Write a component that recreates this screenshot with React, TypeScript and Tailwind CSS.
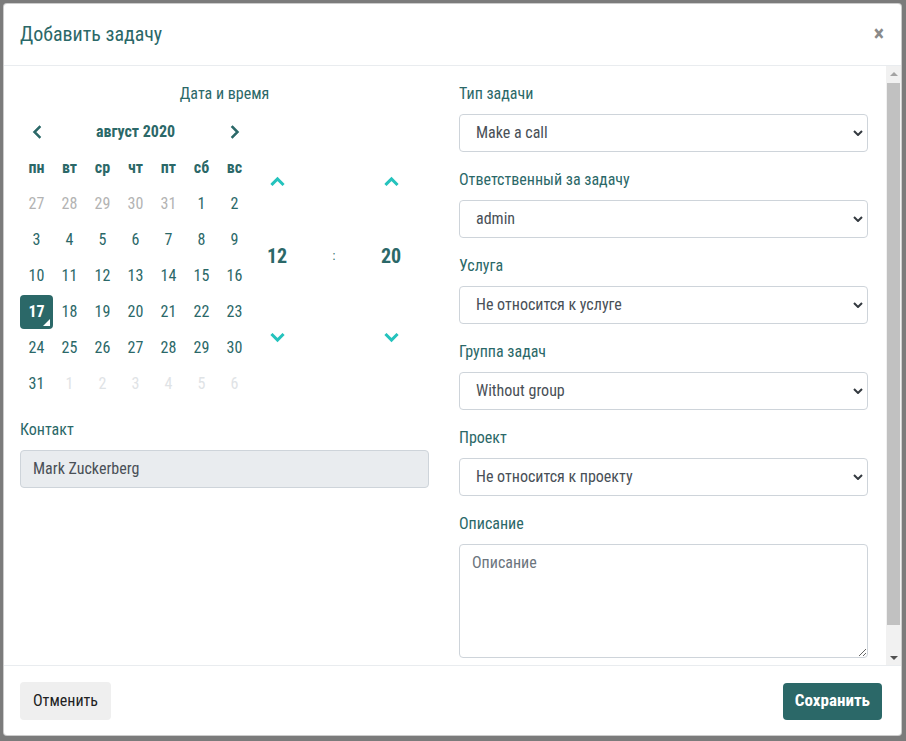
import { ReactNode } from "react";

const weeks: { d: number; kind: "prev" | "cur" | "next" }[][] = [
  [27, 28, 29, 30, 31].map((d) => ({ d, kind: "prev" as const })).concat([1, 2].map((d) => ({ d, kind: "cur" as const }))),
  [3, 4, 5, 6, 7, 8, 9].map((d) => ({ d, kind: "cur" as const })),
  [10, 11, 12, 13, 14, 15, 16].map((d) => ({ d, kind: "cur" as const })),
  [17, 18, 19, 20, 21, 22, 23].map((d) => ({ d, kind: "cur" as const })),
  [24, 25, 26, 27, 28, 29, 30].map((d) => ({ d, kind: "cur" as const })),
  [{ d: 31, kind: "cur" as const }].concat([1, 2, 3, 4, 5, 6].map((d) => ({ d, kind: "next" as const }))),
];

const weekdays = ["пн", "вт", "ср", "чт", "пт", "сб", "вс"];

function Chevron({ dir, className, sw = 3 }: { dir: "left" | "right" | "up" | "down"; className: string; sw?: number }) {
  const d = {
    left: "M9 2 L3 8 L9 14",
    right: "M3 2 L9 8 L3 14",
    up: "M2 9.5 L8 3.5 L14 9.5",
    down: "M2 2.5 L8 8.5 L14 2.5",
  }[dir];
  const box = dir === "left" || dir === "right" ? "0 0 12 16" : "0 0 16 12";
  return (
    <svg viewBox={box} className={className} fill="none" stroke="currentColor" strokeWidth={sw} strokeLinecap="square">
      <path d={d} />
    </svg>
  );
}

function Field({ label, children }: { label: string; children: ReactNode }) {
  return (
    <div className="mb-4">
      <label className="mb-2 block text-[16px] leading-6 text-[#2b6868]">{label}</label>
      {children}
    </div>
  );
}

function Select({ value }: { value: string }) {
  return (
    <div className="relative">
      <select
        defaultValue={value}
        className="h-[38px] w-full appearance-none rounded border border-[#ced4da] bg-white pl-4 pr-8 text-[16px] text-[#495057] outline-none"
      >
        <option>{value}</option>
      </select>
      <svg
        viewBox="0 0 10 6"
        className="pointer-events-none absolute right-[5px] top-[16px] h-[6px] w-[10px] text-[#343a40]"
        fill="none"
        stroke="currentColor"
        strokeWidth={2}
      >
        <path d="M1 1 L5 5 L9 1" />
      </svg>
    </div>
  );
}

function DateTimePicker() {
  return (
    <div className="flex">
      <div className="w-[231px]">
        <div className="grid h-9 grid-cols-[33px_165px_33px] items-center text-[#2b6868]">
          <div className="flex justify-center">
            <Chevron dir="left" className="h-[14px] w-[10px]" />
          </div>
          <div className="text-center text-[16px] font-bold">август 2020</div>
          <div className="flex justify-center">
            <Chevron dir="right" className="h-[14px] w-[10px]" />
          </div>
        </div>
        <div className="grid h-9 grid-cols-7 items-center text-center text-[16px] font-bold text-[#2b6868]">
          {weekdays.map((w) => (
            <div key={w}>{w}</div>
          ))}
        </div>
        {weeks.map((week, i) => (
          <div key={i} className="grid h-9 grid-cols-7 text-center text-[16px]">
            {week.map((c, j) =>
              c.kind === "cur" && c.d === 17 ? (
                <div key={j} className="relative my-px flex items-center justify-center rounded bg-[#2b6868] font-bold text-white">
                  {c.d}
                  <span className="absolute bottom-[3px] right-[3px] h-0 w-0 border-b-[7px] border-l-[7px] border-b-white border-l-transparent" />
                </div>
              ) : (
                <div
                  key={j}
                  className={
                    c.kind === "prev"
                      ? "flex items-center justify-center text-[#b3b3b3]"
                      : c.kind === "next"
                        ? "flex items-center justify-center text-[#dfe3e6]"
                        : "flex items-center justify-center text-[#2b6868]"
                  }
                >
                  {c.d}
                </div>
              ),
            )}
          </div>
        ))}
      </div>
      <div className="grid w-[166px] grid-cols-[52px_62px_52px] pt-[62px] text-[#2b6868]">
        {["12", ":", "20"].map((t, i) => (
          <div key={i} className="flex flex-col items-center">
            <div className="flex h-[10px] items-center">
              {t !== ":" && <Chevron dir="up" sw={3.6} className="h-[10px] w-[15px] text-[#25c3bd]" />}
            </div>
            <div className={t === ":" ? "mt-[58px] h-6 text-[12px] leading-6" : "mt-[58px] h-6 text-[20px] font-bold leading-6"}>{t}</div>
            <div className="mt-[65px] flex h-[10px] items-center">
              {t !== ":" && <Chevron dir="down" sw={3.6} className="h-[10px] w-[15px] text-[#25c3bd]" />}
            </div>
          </div>
        ))}
      </div>
    </div>
  );
}

function ScrollBar() {
  return (
    <div className="flex w-[15px] shrink-0 flex-col bg-[#f1f1f1]">
      <div className="flex h-[15px] items-center justify-center">
        <svg viewBox="0 0 8 4" className="h-[4px] w-[8px] text-[#a3a3a3]" fill="currentColor">
          <path d="M0 4 L4 0 L8 4 Z" />
        </svg>
      </div>
      <div className="flex-1 px-px pt-[2px]">
        <div className="h-[542px] bg-[#c1c1c1]" />
      </div>
      <div className="flex h-[15px] items-center justify-center">
        <svg viewBox="0 0 8 4" className="h-[4px] w-[8px] text-[#505050]" fill="currentColor">
          <path d="M0 0 L8 0 L4 4 Z" />
        </svg>
      </div>
    </div>
  );
}

export default function App() {
  return (
    <div className="h-[741px] w-[906px] overflow-hidden bg-[#7b7b7b] p-[3px] font-[Roboto,sans-serif] [font-stretch:75%]">
      <div className="flex h-[733px] w-[899px] flex-col overflow-hidden rounded border border-black/20 bg-white">
        <header className="flex h-[62px] shrink-0 items-center justify-between border-b border-[#e9ecef] pb-px pl-4 pr-[17px]">
          <h1 className="text-[20px] leading-[30px] text-[#2b6868]">Добавить задачу</h1>
          <span className="text-[22px] font-bold leading-none text-[#8a8a8a]">×</span>
        </header>

        <div className="flex min-h-0 flex-1">
          <div className="min-w-0 flex-1 overflow-hidden">
            <div className="grid grid-cols-2 gap-[30px] pb-5 pl-4 pr-[18px] pt-4">
              <div>
                <div className="text-center text-[16px] leading-6 text-[#2b6868]">Дата и время</div>
                <div className="mb-4 mt-[8px]">
                  <DateTimePicker />
                </div>
                <Field label="Контакт">
                  <div className="flex h-[38px] items-center rounded border border-[#ced4da] bg-[#e9ecef] px-3 text-[16px] text-[#495057]">
                    Mark Zuckerberg
                  </div>
                </Field>
              </div>

              <div>
                <Field label="Тип задачи">
                  <Select value="Make a call" />
                </Field>
                <Field label="Ответственный за задачу">
                  <Select value="admin" />
                </Field>
                <Field label="Услуга">
                  <Select value="Не относится к услуге" />
                </Field>
                <Field label="Группа задач">
                  <Select value="Without group" />
                </Field>
                <Field label="Проект">
                  <Select value="Не относится к проекту" />
                </Field>
                <Field label="Описание">
                  <textarea
                    placeholder="Описание"
                    className="block h-[114px] w-full rounded border border-[#ced4da] px-3 py-[6px] text-[16px] text-[#495057] outline-none placeholder:text-[#6c757d]"
                  />
                </Field>
              </div>
            </div>
          </div>
          <ScrollBar />
        </div>

        <footer className="flex h-[70px] shrink-0 items-center justify-between border-t border-[#e9ecef] pl-4 pr-[19px] pt-px">
          <button className="h-[38px] rounded bg-[#efefef] px-[13px] text-[16px] text-[#222]">Отменить</button>
          <button className="h-[37px] rounded bg-[#2b6868] px-3 text-[17px] font-bold text-white">Сохранить</button>
        </footer>
      </div>
    </div>
  );
}
